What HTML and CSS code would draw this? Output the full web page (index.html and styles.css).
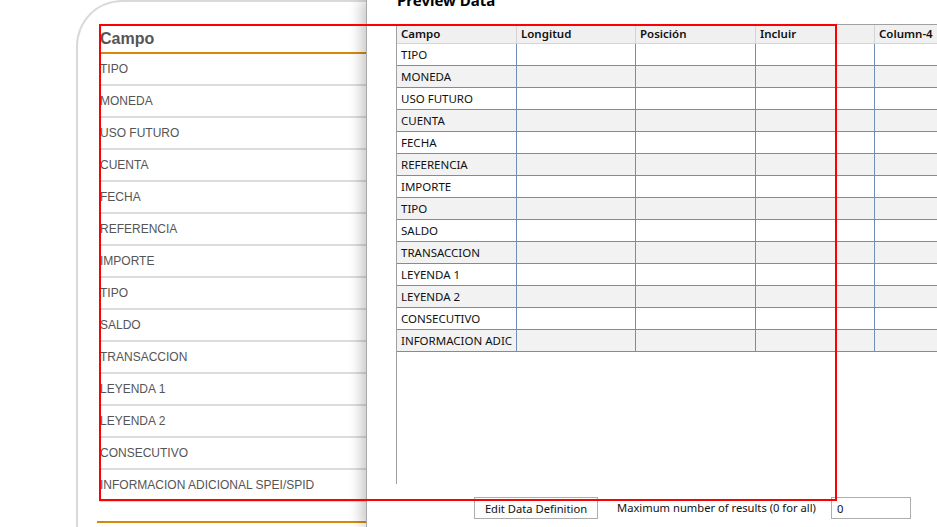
FILE: index.html
```html
<!DOCTYPE html>
<html>
<head>
<meta charset="utf-8">
<link rel="stylesheet" href="styles.css">
</head>
<body>
<div class="page">
  <div class="card">
    <div class="list">
      <div class="list-head">Campo</div>
      <div class="list-row">TIPO</div>
      <div class="list-row">MONEDA</div>
      <div class="list-row">USO FUTURO</div>
      <div class="list-row">CUENTA</div>
      <div class="list-row">FECHA</div>
      <div class="list-row">REFERENCIA</div>
      <div class="list-row">IMPORTE</div>
      <div class="list-row">TIPO</div>
      <div class="list-row">SALDO</div>
      <div class="list-row">TRANSACCION</div>
      <div class="list-row">LEYENDA 1</div>
      <div class="list-row">LEYENDA 2</div>
      <div class="list-row">CONSECUTIVO</div>
      <div class="list-row">INFORMACION ADICIONAL SPEI/SPID</div>
    </div>
    <div class="list-foot"></div>
  </div>
</div>

<div class="panel">
  <div class="title">Preview Data</div>
  <div class="grid">
    <div class="grow head">
      <div class="hc">Campo</div><div class="hc">Longitud</div><div class="hc">Posición</div><div class="hc">Incluir</div><div class="hc">Column-4</div>
    </div>
    <div class="grow"><div class="c">TIPO</div><div class="c"></div><div class="c"></div><div class="c"></div><div class="c"></div></div>
    <div class="grow alt"><div class="c">MONEDA</div><div class="c"></div><div class="c"></div><div class="c"></div><div class="c"></div></div>
    <div class="grow"><div class="c">USO FUTURO</div><div class="c"></div><div class="c"></div><div class="c"></div><div class="c"></div></div>
    <div class="grow alt"><div class="c">CUENTA</div><div class="c"></div><div class="c"></div><div class="c"></div><div class="c"></div></div>
    <div class="grow"><div class="c">FECHA</div><div class="c"></div><div class="c"></div><div class="c"></div><div class="c"></div></div>
    <div class="grow alt"><div class="c">REFERENCIA</div><div class="c"></div><div class="c"></div><div class="c"></div><div class="c"></div></div>
    <div class="grow"><div class="c">IMPORTE</div><div class="c"></div><div class="c"></div><div class="c"></div><div class="c"></div></div>
    <div class="grow alt"><div class="c">TIPO</div><div class="c"></div><div class="c"></div><div class="c"></div><div class="c"></div></div>
    <div class="grow"><div class="c">SALDO</div><div class="c"></div><div class="c"></div><div class="c"></div><div class="c"></div></div>
    <div class="grow alt"><div class="c">TRANSACCION</div><div class="c"></div><div class="c"></div><div class="c"></div><div class="c"></div></div>
    <div class="grow"><div class="c">LEYENDA 1</div><div class="c"></div><div class="c"></div><div class="c"></div><div class="c"></div></div>
    <div class="grow alt"><div class="c">LEYENDA 2</div><div class="c"></div><div class="c"></div><div class="c"></div><div class="c"></div></div>
    <div class="grow"><div class="c">CONSECUTIVO</div><div class="c"></div><div class="c"></div><div class="c"></div><div class="c"></div></div>
    <div class="grow alt"><div class="c">INFORMACION ADIC</div><div class="c"></div><div class="c"></div><div class="c"></div><div class="c"></div></div>
  </div>
  <div class="footer">
    <div class="btn">Edit Data Definition</div>
    <div class="lbl">Maximum number of results (0 for all)</div>
    <div class="inp">0</div>
  </div>
</div>

<div class="marker"></div>
</body>
</html>
```

FILE: styles.css
```css
html, body {
  margin: 0;
  padding: 0;
}
body {
  width: 937px;
  height: 527px;
  overflow: hidden;
  position: relative;
  background: #ffffff;
}

/* background page */
.page {
  padding-left: 76px;
  width: 290px;
  overflow: hidden;
}
.card {
  border-left: 2px solid #d9d9d9;
  border-top: 2px solid #d9d9d9;
  border-top-left-radius: 46px;
  height: 527px;
  padding-left: 21px;
  padding-top: 23px;
  box-sizing: border-box;
  font-family: "Liberation Sans", Arial, sans-serif;
  color: #555555;
}
.list {
  width: 269px;
}
.list-head {
  height: 27px;
  line-height: 27px;
  font-size: 16px;
  font-weight: bold;
  border-bottom: 2px solid #d4890a;
  padding-left: 1px;
}
.list-row {
  height: 30px;
  line-height: 30px;
  font-size: 12px;
  border-bottom: 2px solid #dcdcdc;
  padding-left: 1px;
  white-space: nowrap;
}
.list-foot {
  margin-top: 19px;
  margin-left: -2px;
  width: 271px;
  border-top: 2px solid #d4890a;
}

/* overlay window */
.panel {
  position: absolute;
  left: 366px;
  top: 0;
  right: 0;
  bottom: 0;
  background: #ffffff;
  border-left: 1px solid #a9a9a9;
  box-shadow: -5px 0 12px rgba(0, 0, 0, 0.22);
  padding-left: 29px;
  overflow: hidden;
  font-family: "Noto Sans", "Open Sans", sans-serif;
  color: #111111;
}
.title {
  margin-top: -10px;
  height: 20px;
  line-height: 20px;
  font-size: 15px;
  font-weight: bold;
  padding-left: 1px;
  margin-bottom: 14px;
  color: #000;
}
.grid {
  height: 460px;
  border-left: 1px solid #a0a0a0;
  border-top: 1px solid #a0a0a0;
  box-sizing: border-box;
}
.grow {
  display: grid;
  grid-template-columns: 120px 119px 120px 119px 120px;
  height: 22px;
}
.grow.alt {
  background: #f2f2f2;
}
.grow.head {
  height: 19px;
  background: #f0f0f0;
}
.hc {
  border-right: 1px solid #d5d5d5;
  border-bottom: 1px solid #d5d5d5;
  font-size: 11.5px;
  font-weight: 600;
  line-height: 18px;
  padding-left: 4px;
  box-sizing: border-box;
  white-space: nowrap;
  overflow: hidden;
}
.c {
  border-right: 1px solid #6f8fb8;
  border-bottom: 1px solid #6f8fb8;
  font-size: 11.5px;
  line-height: 22px;
  padding-left: 4px;
  box-sizing: border-box;
  white-space: nowrap;
  overflow: hidden;
}
.footer {
  display: flex;
  align-items: center;
  margin-top: 13px;
  margin-left: 78px;
  font-size: 11.2px;
}
.btn {
  width: 124px;
  height: 22px;
  box-sizing: border-box;
  border: 1px solid #adadad;
  background: #fdfdfd;
  text-align: center;
  line-height: 21px;
}
.lbl {
  margin-left: 19px;
  width: 214px;
  line-height: 22px;
}
.inp {
  width: 80px;
  height: 22px;
  box-sizing: border-box;
  border: 1px solid #adadad;
  line-height: 21px;
  padding-left: 5px;
}

/* annotation */
.marker {
  position: absolute;
  left: 99px;
  top: 24px;
  width: 738px;
  height: 477px;
  box-sizing: border-box;
  border: 2px solid #ff0000;
  pointer-events: none;
}
```
